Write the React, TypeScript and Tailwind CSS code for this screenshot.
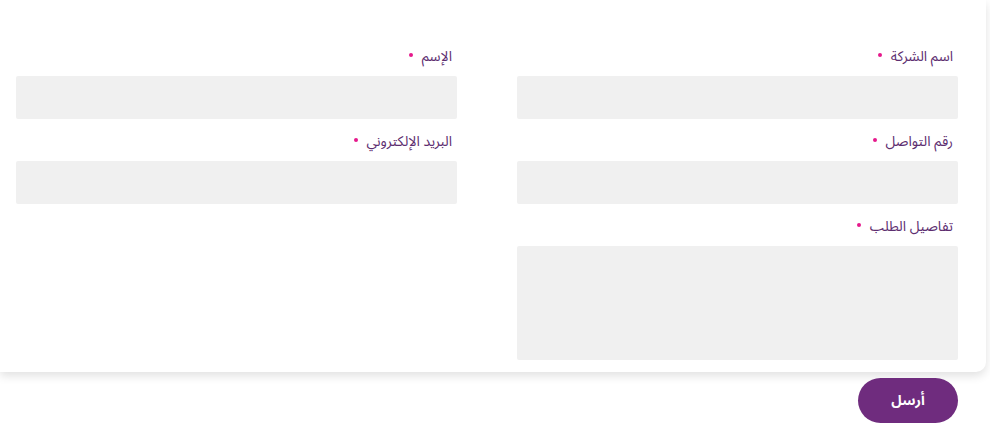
import React from "react";

function Field({ label, tall }: { label: string; tall?: boolean }) {
  return (
    <div className="flex flex-col">
      <label className="flex items-center gap-[9px] text-[14px] leading-[20px] text-[#5d2e70] mb-[9px] pr-[5px]">
        <span>{label}</span>
        <span className="inline-block w-[4px] h-[4px] rounded-full bg-[#e6198c] -mt-[4px]"></span>
      </label>
      {tall ? (
        <textarea className="w-full h-[114px] bg-[#f0f0f0] rounded-[2px] resize-none outline-none" />
      ) : (
        <input className="w-full h-[43px] bg-[#f0f0f0] rounded-[2px] outline-none" />
      )}
    </div>
  );
}

export default function App() {
  return (
    <div dir="rtl" className="w-[990px] h-[430px] bg-white font-['Noto_Sans_Arabic','DejaVu_Sans',sans-serif] overflow-hidden">
      <div className="w-[986px] mr-auto bg-white rounded-br-[10px] shadow-[0_4px_10px_rgba(0,0,0,0.12)] pt-[47px] pb-[12px] pr-[28px] pl-[16px]">
        <div className="grid grid-cols-2 gap-x-[60px]">
          <div className="flex flex-col gap-[13px]">
            <Field label="اسم الشركة" />
            <Field label="رقم التواصل" />
            <Field label="تفاصيل الطلب" tall />
          </div>
          <div className="flex flex-col gap-[13px]">
            <Field label="الإسم" />
            <Field label="البريد الإلكتروني" />
          </div>
        </div>
      </div>
      <div className="flex pr-[32px] mt-[6px]">
        <button className="w-[100px] h-[45px] rounded-full bg-[#6f2c7e] text-white text-[14px] font-bold">أرسل</button>
      </div>
    </div>
  );
}
